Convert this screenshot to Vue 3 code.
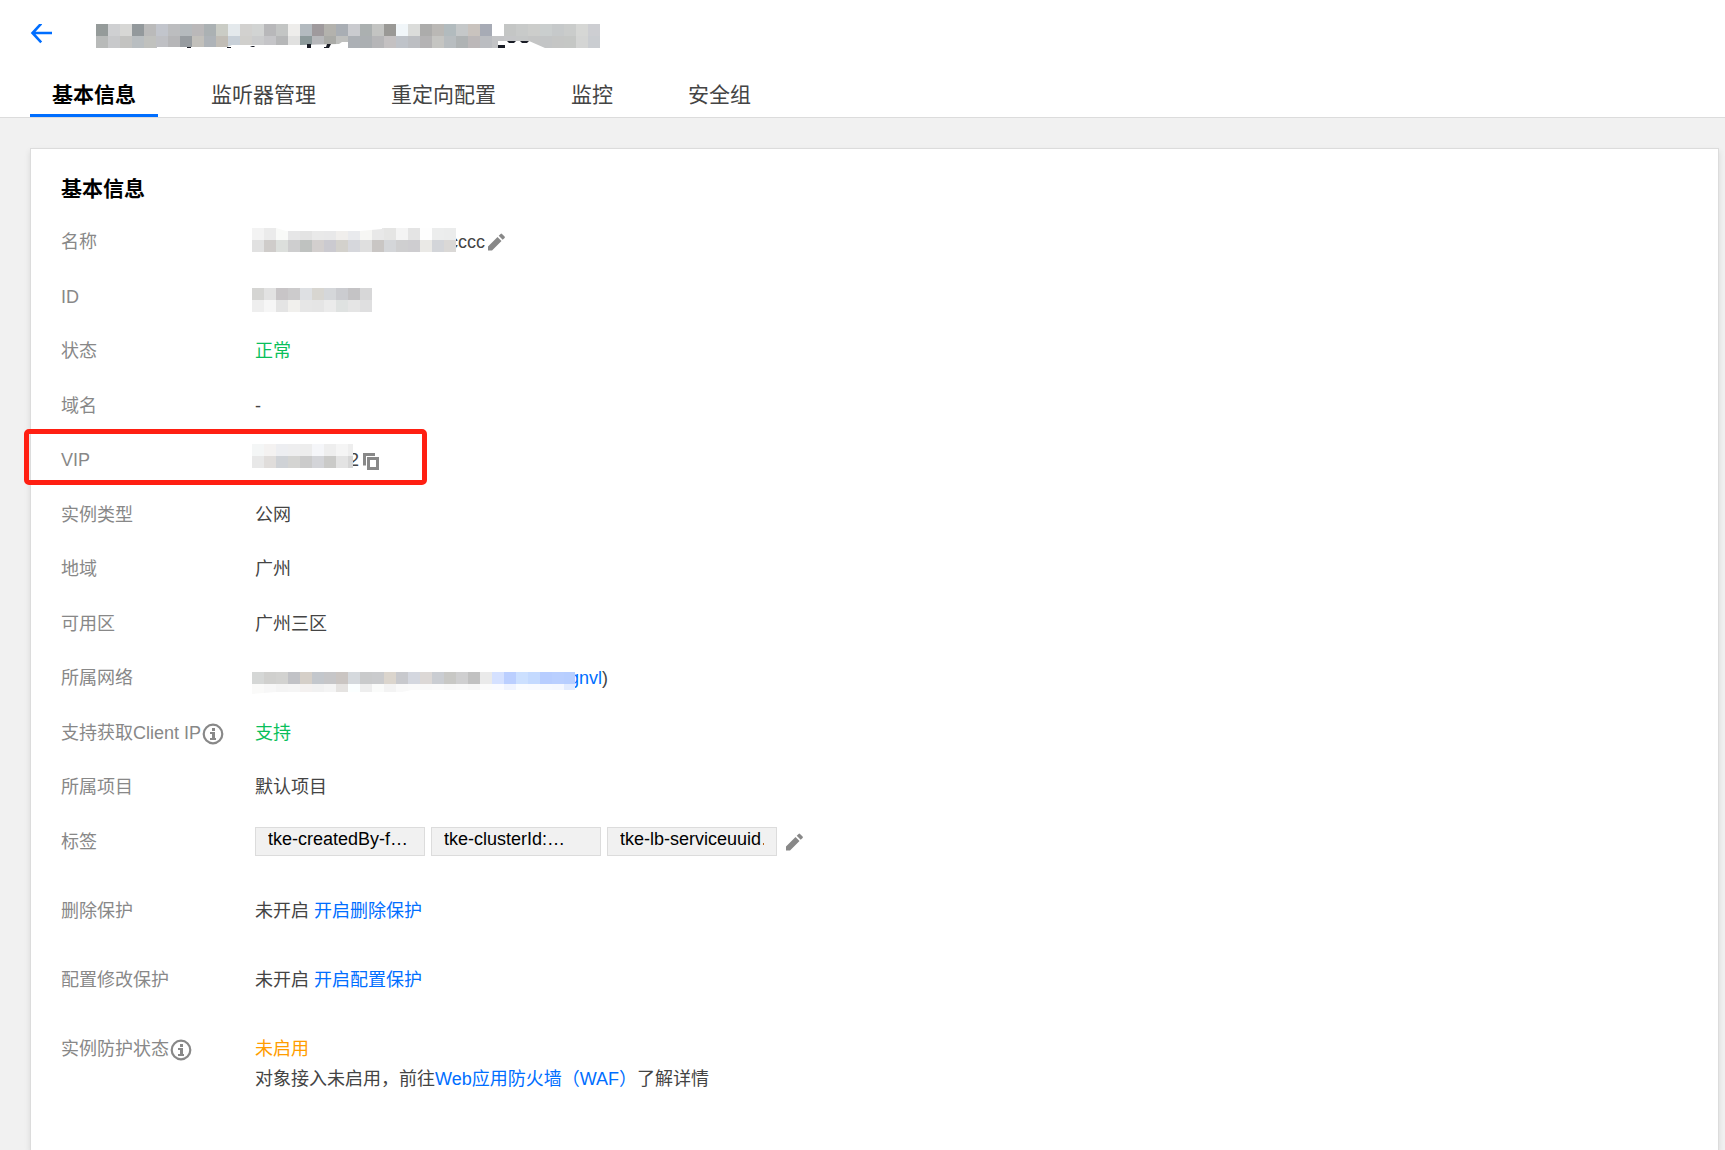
<script setup>
import { h, ref } from 'vue'

const tabs = ['基本信息', '监听器管理', '重定向配置', '监控', '安全组']
const activeTab = ref(0)

const tags = ['tke-createdBy-f…', 'tke-clusterId:…', 'tke-lb-serviceuuid…']

const CELL = 12

// Redacted values: two rows of 12px blocks, colours as hex strings.
// space is the width of the hidden text, width that of the blocks over it.
const masks = {
  title: {
    width: 504,
    space: 504,
    top: 0,
    rows: [
      '959b9a cfd0d2 d7d7d5 93999c bababa c2c5cc bcbdbf b5babd bab8b9 abb1b3 caccc5 e4e9ec d2d1cf d2d4d3 b8b8ba c3c5c4 eeedeb b3babf 9f9a9d b3b2ad a9aeb4 cacbcf abb0b0 c3c4c2 9a9996 f1f6f9 dbdcda acacab bab8b5 b2bbbe c5c8c9 c9c3be a7abb5 ffffff c4c6c5 c8cac9 cccdcb cacece c6c9ca cacccb d6d7d5 cdced2',
      'b8bab9 c8c9cb c3c3c1 b9bec1 c0c1be bfc0c4 b6b6b8 979ca0 c2c0bb aeb3b8 c1bdb6 c8d0d8 d0cfcc cbcccd c5c5c8 b6b7b8 e1e1e0 8d9a9b b7b8bb aaaba7 bfc0be acb0b5 abafb2 b6b6b8 c4c1c2 bfc3c9 bcbec2 b4b3b4 c5c5c2 b8bdc0 afb3b4 bcb8b9 bbbdc1 c3c4c6 c5c6c8 c5c7c7 c4c5c5 c3c5c6 c5c6c5 c5c7c5 d4d5d4 cacdd1'
    ],
    cut: 'M61 24V23H131L136 21H204L243 20L246 18H252V24ZM402 24V17H433L449 24Z',
    ink: 'M91 23h4v1h-4zM131 23h4v1h-4zM154 22h4l1 1h-3zM211 20h4v4h-4zM231 20h4l-2 4h-5v-1h2zM402 21h7v3h-7zM411 17h9l-2 2h-5zM424 17h9l-2 2h-5z'
  },
  name: {
    width: 204,
    space: 203,
    top: 1,
    rows: [
      'f3f3f3 ebebeb f9faf8 e6e6e7 e3e3e3 e9e9e9 e8e8e9 f0eeec e9eaed f6f6f4 e8e8e8 e5e5e4 f4f4f4 e4e4e4 fefefe eceded ebecec',
      'e1e1e1 cfccca dcdfdc cececf bfc2c0 d3cfce cbcad0 d3d1cc d6d7dc dfdfdf c9c6c4 d4d6d9 cfcfd0 cecdd0 eae9e6 d3d5d9 dad8d6'
    ],
    cut: 'M24 0L34 3H108L130 1V0Z'
  },
  id: {
    width: 120,
    space: 120,
    top: 6,
    rows: [
      'd5d5d3 e2e2e2 c8c5c7 cccbcc dee0e3 d8d6d1 d5d7da cbccd0 c4c3c5 d7d7d8',
      'eeeeee f6f6f6 e4e4e4 f1f0ed e6e6e6 e5e5e5 ebebeb dfe2e1 e5e5e5 dfdfe0'
    ]
  },
  vip: {
    width: 101,
    space: 103,
    top: -1,
    rows: [
      'f4f6f6 f4f2f1 edeef1 eeeeef ededed f5f6f9 eeeeee f5f5f5 eeeeee',
      'e8e8e8 e0dddb cfd2d6 d4d4d2 cbcbcb d3d4d8 cacac8 e3e3e3 d6d6d6'
    ]
  },
  network: {
    width: 323,
    space: 323,
    top: 9,
    rows: [
      'd5d7d6 d0d0ce d2d2d0 c1c2c6 d5cfc8 c3c7cc c6c6c8 cac5c2 d5d9dd c9cacb cacbcd dbd5cd c8c9cd d4d7df dcd8d6 cacdd2 c8c8c5 cfcfd0 c1c1c1 eaeaea d5e1ff bbcfff cce0ff c4daff b7cdff b9cfff b7ceff',
      'fafaf9 f7f7f7 f4f4f4 f5f5f5 f4f1f0 f1f1f1 f4f4f4 e5e3e1 fbffff eeeeee fafbfa f3f3f3 f9f9f9 fafafa f9f9f9 fafafa f8f8f8 f9f9f9 f7f7f7 fbfbfb fafbff f0f4ff fafcff f9fbff f6f9ff f5f8ff e3ecff'
    ],
    cut: 'M0 24V22L24 20H150L160 18H324V24Z'
  }
}

const Mosaic = ({ mask }) => {
  const cells = mask.rows.flatMap((row, y) =>
    row.split(' ').map((color, x) =>
      h('rect', {
        x: x * CELL,
        y: y * CELL,
        width: Math.min(CELL, mask.width - x * CELL),
        height: CELL,
        fill: '#' + color
      })
    )
  )
  return h(
    'svg',
    { width: mask.space, height: 24, viewBox: `0 ${-mask.top} ${mask.space} 24`, 'aria-hidden': 'true' },
    [
      ...cells,
      mask.cut && h('path', { d: mask.cut, fill: '#fff' }),
      mask.ink && h('path', { d: mask.ink, fill: '#1a1d26' })
    ]
  )
}
Mosaic.props = ['mask']

const PencilIcon = () =>
  h('svg', { width: 18, height: 18, viewBox: '0 0 18 18', fill: '#888' }, [
    h('path', { d: 'M0 17.5V13.5L9.5 4L13.5 8L4 17.5ZM10.7 2.8L12.6 .9Q13.3 .2 14 .9L16.6 3.5Q17.3 4.2 16.6 4.9L14.7 6.8Z' })
  ])

const InfoIcon = () =>
  h('svg', { width: 22, height: 22, viewBox: '0 0 22 22', fill: 'none' }, [
    h('circle', { cx: 12, cy: 12, r: 9.3, stroke: '#888', 'stroke-width': 2.2 }),
    h('path', { d: 'M11 6h3v3h-3zM9 10h5v6h1v2H9v-2h2v-4H9z', fill: '#888' })
  ])
</script>

<template>
  <div class="page">
    <header class="header">
      <div class="title-bar">
        <button class="icon-btn" aria-label="返回">
          <svg width="24" height="24" viewBox="0 0 24 24" fill="none" stroke="#006eff" stroke-width="2.6">
            <path d="M11.2 -.4L2.5 9L11.2 18.4M2.5 9H22" />
          </svg>
        </button>
        <Mosaic class="mosaic" :mask="masks.title" />
      </div>
      <nav class="tabs" role="tablist">
        <button
          v-for="(tab, i) in tabs"
          :key="tab"
          class="tab"
          :class="{ active: i === activeTab }"
          role="tab"
          :aria-selected="i === activeTab"
          @click="activeTab = i"
        >{{ tab }}</button>
      </nav>
    </header>

    <main class="card">
      <h3 class="card-title">基本信息</h3>
      <dl class="list">
        <div class="row">
          <dt>名称</dt>
          <dd>
            <Mosaic class="mosaic value-mosaic" :mask="masks.name" />
            <span class="tail">cccc</span>
            <button class="icon-btn edit" aria-label="编辑名称"><PencilIcon /></button>
          </dd>
        </div>
        <div class="row">
          <dt>ID</dt>
          <dd><Mosaic class="mosaic value-mosaic" :mask="masks.id" /></dd>
        </div>
        <div class="row">
          <dt>状态</dt>
          <dd class="success">正常</dd>
        </div>
        <div class="row">
          <dt>域名</dt>
          <dd>-</dd>
        </div>
        <div class="row highlighted">
          <dt>VIP</dt>
          <dd>
            <Mosaic class="mosaic value-mosaic" :mask="masks.vip" />
            <span class="tail">2</span>
            <button class="icon-btn copy" aria-label="复制">
              <svg width="18" height="20" viewBox="0 0 18 20" fill="none" stroke="#888" stroke-width="3">
                <path d="M2.5 15.5V4.5H13" />
                <path d="M6.5 8.5H15.5V18.5H6.5Z" />
              </svg>
            </button>
          </dd>
        </div>
        <div class="row">
          <dt>实例类型</dt>
          <dd>公网</dd>
        </div>
        <div class="row">
          <dt>地域</dt>
          <dd>广州</dd>
        </div>
        <div class="row">
          <dt>可用区</dt>
          <dd>广州三区</dd>
        </div>
        <div class="row">
          <dt>所属网络</dt>
          <dd>
            <Mosaic class="mosaic value-mosaic" :mask="masks.network" />
            <a class="tail" href="#">gnvl</a>)
          </dd>
        </div>
        <div class="row">
          <dt>支持获取Client IP<InfoIcon class="info" /></dt>
          <dd class="success">支持</dd>
        </div>
        <div class="row">
          <dt>所属项目</dt>
          <dd>默认项目</dd>
        </div>
        <div class="row tall">
          <dt>标签</dt>
          <dd class="tags">
            <span v-for="tag in tags" :key="tag" class="tag"><span class="tag-text">{{ tag }}</span></span>
            <button class="icon-btn edit" aria-label="编辑标签"><PencilIcon /></button>
          </dd>
        </div>
        <div class="row tall">
          <dt>删除保护</dt>
          <dd><span>未开启&nbsp;<a href="#">开启删除保护</a></span></dd>
        </div>
        <div class="row tall">
          <dt>配置修改保护</dt>
          <dd><span>未开启&nbsp;<a href="#">开启配置保护</a></span></dd>
        </div>
        <div class="row tall">
          <dt>实例防护状态<InfoIcon class="info" /></dt>
          <dd class="stacked">
            <span class="warning">未启用</span>
            <span>对象接入未启用，前往<a href="#">Web应用防火墙（WAF）</a>了解详情</span>
          </dd>
        </div>
      </dl>
    </main>
  </div>
</template>

<style>
body {
  margin: 0;
  background: #f1f1f1;
}
</style>

<style scoped>
.page {
  display: flex;
  flex-direction: column;
  box-sizing: border-box;
  min-height: 100vh;
  font-family: "Liberation Sans", "Noto Sans CJK SC", sans-serif;
  font-size: 18px;
  font-weight: 400;
  line-height: 30px;
  color: #444;
}

button {
  font-family: inherit;
  border: none;
  background: none;
  padding: 0;
  cursor: pointer;
}

a {
  color: #006eff;
  text-decoration: none;
}

.icon-btn {
  display: flex;
  flex: none;
}

.header {
  padding: 24px 30px 0;
  background: #fff;
  border-bottom: 1px solid #dcdcdc;
}

.title-bar {
  display: flex;
  gap: 42px;
  height: 24px;
  margin-bottom: 24px;
}

.mosaic {
  position: relative;
  z-index: 1;
  flex: none;
  overflow: visible;
}

.tabs {
  display: flex;
  gap: 31px;
}

.tab {
  box-sizing: border-box;
  height: 45px;
  padding: 0 22px;
  border-top: 3px solid transparent;
  border-bottom: 3px solid transparent;
  font-size: 21px;
  font-weight: 400;
  line-height: 39px;
  color: #444;
}

.tab.active {
  border-bottom-color: #006eff;
  font-weight: 700;
  color: #000;
}

.card {
  flex: 1;
  margin: 30px 6px 0 30px;
  padding: 25px 30px;
  background: #fff;
  border: 1px solid #dcdcdc;
  border-bottom: none;
  box-shadow: 0 3px 6px rgba(0, 0, 0, 0.1);
}

.card-title {
  margin: 0 0 23px;
  font-size: 21px;
  font-weight: 700;
  color: #000;
}

.list {
  margin: 0;
}

.row {
  display: flex;
  position: relative;
  min-height: 55px;
}

.row:nth-child(even) {
  min-height: 54px;
}

.row.tall {
  min-height: 69px;
}

dt {
  display: flex;
  flex: none;
  width: 194px;
  height: 30px;
  align-items: center;
  color: #888;
}

dd {
  display: flex;
  flex: 1;
  margin: 0;
}

.info {
  flex: none;
  overflow: visible;
}

.value-mosaic {
  margin-left: -3px;
}

.tail {
  margin-left: -6px;
}

.edit,
.copy {
  height: 30px;
  margin-left: 3px;
  align-items: center;
}

/* marker drawn around the VIP row */
.highlighted::after {
  content: "";
  position: absolute;
  top: -16px;
  left: -37px;
  box-sizing: border-box;
  width: 403px;
  height: 56px;
  border: 5px solid #ff1f12;
  border-radius: 5px;
  pointer-events: none;
}

.tags {
  gap: 6px;
}

.tag {
  box-sizing: border-box;
  width: 170px;
  height: 29px;
  padding: 0 12px;
  background: #f1f1f1;
  border: 1px solid #dcdcdc;
  color: #000;
}

.tag-text {
  display: block;
  overflow: hidden;
  white-space: nowrap;
  line-height: 23px;
}

.stacked {
  flex-direction: column;
}

.success {
  color: #0abf5b;
}

.warning {
  color: #ff9d00;
}
</style>
